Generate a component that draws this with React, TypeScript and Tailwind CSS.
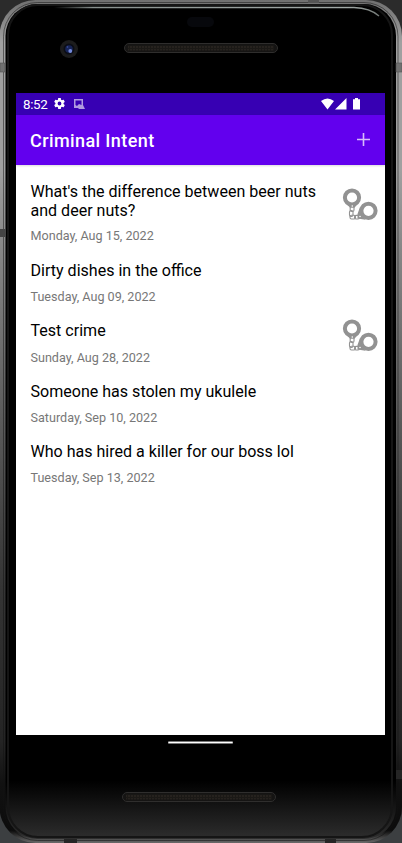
import React from "react";

type Crime = { title: string; date: string; solved: boolean; lines: number };

const crimes: Crime[] = [
  { title: "What's the difference between beer nuts and deer nuts?", date: "Monday, Aug 15, 2022", solved: true, lines: 2 },
  { title: "Dirty dishes in the office", date: "Tuesday, Aug 09, 2022", solved: false, lines: 1 },
  { title: "Test crime", date: "Sunday, Aug 28, 2022", solved: true, lines: 1 },
  { title: "Someone has stolen my ukulele", date: "Saturday, Sep 10, 2022", solved: false, lines: 1 },
  { title: "Who has hired a killer for our boss lol", date: "Tuesday, Sep 13, 2022", solved: false, lines: 1 },
];

function Handcuffs({ className }: { className: string }) {
  return (
    <svg width="36" height="34" viewBox="0 0 36 34" fill="none" stroke="#929292" className={`shrink-0 ${className}`}>
      <circle cx="10" cy="9.500" r="7.100" strokeWidth="4" />
      <path d="M2.500 13.500 8 19.800h4.500L17.500 13.500l-3.500 1.300-4 1.400-4-1.400z" fill="#929292" stroke="none" />
      <circle cx="26.500" cy="22.800" r="7.100" strokeWidth="4" />
      <path d="M18 19 15.500 26v4.500l8 1.300-3.500-5.500z" fill="#929292" stroke="none" />
      <rect x="8.200" y="18" width="3.800" height="5.500" rx="1.500" strokeWidth="1.100" />
      <rect x="7.500" y="22.500" width="3.500" height="6" rx="1.500" strokeWidth="1.100" />
      <rect x="8" y="27.200" width="5.500" height="3.800" rx="1.500" strokeWidth="1.100" />
      <rect x="12.500" y="27.400" width="5" height="3.600" rx="1.500" strokeWidth="1.100" />
      <circle cx="10.300" cy="18" r=".8" fill="#fff" stroke="none" />
      <circle cx="18" cy="28.500" r=".8" fill="#fff" stroke="none" />
    </svg>
  );
}

/* Metal shell of the handset, with its glass edge, antenna bands and side keys. */
function Shell() {
  return (
    <svg className="absolute inset-0" width="402" height="843" viewBox="0 0 402 843">
      <defs>
        <linearGradient id="backdrop" x1="0" y1="0" x2="0" y2="1">
          <stop offset="0" stopColor="#2b2b2b" />
          <stop offset=".96" stopColor="#2b2b2b" />
          <stop offset=".97" stopColor="#3c3f41" />
        </linearGradient>
        <linearGradient id="metal" x1="0" y1="0" x2="0" y2="1">
          <stop offset="0" stopColor="#707070" />
          <stop offset=".05" stopColor="#a0a0a0" />
          <stop offset=".2" stopColor="#a0a0a0" />
          <stop offset=".3" stopColor="#858585" />
          <stop offset=".5" stopColor="#5a5a5a" />
          <stop offset=".7" stopColor="#343434" />
          <stop offset=".88" stopColor="#242424" />
          <stop offset=".93" stopColor="#111" />
          <stop offset=".985" stopColor="#0c0c0c" />
          <stop offset="1" stopColor="#6a6a6a" />
        </linearGradient>
        <linearGradient id="glass" x1="0" y1="0" x2="0" y2="1">
          <stop offset="0" stopColor="#000" />
          <stop offset=".93" stopColor="#000" />
          <stop offset="1" stopColor="#2e2e2e" />
        </linearGradient>
        <linearGradient id="shine" gradientUnits="userSpaceOnUse" x1="54" y1="0" x2="380" y2="0">
          <stop offset="0" stopColor="#89918f" stopOpacity="0" />
          <stop offset=".12" stopColor="#89918f" />
          <stop offset=".9" stopColor="#a2aaa8" />
          <stop offset="1" stopColor="#bbc5c0" stopOpacity=".6" />
        </linearGradient>
      </defs>
      <rect width="402" height="843" fill="url(#backdrop)" />
      <rect x="-.5" y="0" width="402.500" height="843" rx="36" fill="url(#metal)" />
      <rect x="3.500" y="2.500" width="394.500" height="838" rx="34" fill="none" stroke="#111" strokeOpacity=".5" />
      <rect x="5.500" y="4" width="390.500" height="835" rx="32" fill="url(#glass)" />
      <rect x="8" y="5" width="384" height="832" rx="30" fill="none" stroke="#151515" strokeWidth="2" />
      <path d="M54 7.500H354Q370 8 379 16" fill="none" stroke="url(#shine)" strokeWidth="1.400" />
      <path d="M0 63h5v9H0zM396 63h6v9h-6z" fill="#707070" stroke="#555" strokeWidth=".6" />
      <path d="M308 0h11v3h-11z" fill="#555" />
      <path d="M0 229h5v8H0z" fill="#444" />
      <path d="M64 839h13v4H64zM325 839h11v4h-11zM396 770h6v9h-6z" fill="#252525" />
    </svg>
  );
}

function Speaker({ id }: { id: string }) {
  return (
    <svg width="154" height="10" viewBox="0 0 154 10">
      <defs>
        <pattern id={id} width="3" height="3" patternUnits="userSpaceOnUse">
          <rect width="3" height="3" fill="#1b1916" />
          <path d="M1 0v2" stroke="#302b25" />
        </pattern>
      </defs>
      <rect x=".5" y=".5" width="153" height="9" rx="4.500" fill="#151413" stroke="#2f2e2d" />
      <rect x="4" y="2.500" width="146" height="5" fill={`url(#${id})`} />
    </svg>
  );
}

export default function App() {
  return (
    <div className="relative h-[843px] w-[402px] overflow-hidden font-['Roboto',sans-serif]">
      <Shell />
      <div className="relative flex h-full flex-col pl-4 pr-[17px]">
        <div className="relative h-[93px] shrink-0">
          <svg className="absolute left-[44px] top-[40px]" width="18" height="18" viewBox="0 0 18 18">
            <circle cx="9" cy="9" r="9" fill="#1c1c1c" />
            <circle cx="9" cy="9" r="5.500" fill="#0b0d16" />
            <circle cx="9" cy="9" r="3.800" fill="#172457" />
            <circle cx="10.300" cy="11" r="1.900" fill="#7389d9" />
            <circle cx="7.500" cy="7" r=".8" fill="#4054a5" />
          </svg>
          <div className="absolute left-[171px] top-[17px] h-[10px] w-[27px] rounded-full bg-[#07080c]" />
          <div className="absolute left-[108px] top-[43px]"><Speaker id="earpiece" /></div>
        </div>
        <main className="flex h-[642px] shrink-0 flex-col bg-white">
          <div className="flex h-[22px] shrink-0 items-center bg-[#3700b3] pl-[7px] text-white">
            <span className="w-[25px] pt-px text-[13.400px] leading-[21px] tracking-[-0.35px]">8:52</span>
            <svg className="-mt-px ml-[5px]" width="13" height="13" viewBox="0 0 24 24" fill="#fff">
              <path d="M19.430 12.980c.04-.32.07-.64.07-.98s-.03-.66-.07-.98l2.110-1.650c.19-.15.24-.42.12-.64l-2-3.460c-.12-.22-.39-.3-.61-.22l-2.490 1c-.52-.4-1.080-.73-1.690-.98l-.38-2.650A.488.488 0 0 0 14 2h-4c-.25 0-.46.18-.49.42l-.38 2.650c-.61.25-1.170.59-1.690.98l-2.490-1c-.23-.09-.49 0-.61.22l-2 3.460c-.13.22-.07.49.12.64l2.110 1.650c-.04.32-.07.65-.07.98s.03.66.07.98l-2.110 1.650c-.19.15-.24.42-.12.64l2 3.460c.12.22.39.3.61.22l2.490-1c.52.4 1.080.73 1.690.98l.38 2.650c.03.24.24.42.49.42h4c.25 0 .46-.18.49-.42l.38-2.650c.61-.25 1.170-.59 1.690-.98l2.490 1c.23.09.49 0 .61-.22l2-3.460c.12-.22.07-.49-.12-.64zM12 15.500a3.500 3.500 0 1 1 0-7 3.500 3.500 0 0 1 0 7z" />
            </svg>
            <svg className="ml-[7px]" width="12" height="11" viewBox="0 0 12 11">
              <path fillRule="evenodd" fill="#b09ae0" d="M1 0H10V6L12 10H6L5 9H1zM2.500 1.500V6L4 7 6 5 8.500 6V1.500z" />
            </svg>
            <svg className="-mt-px ml-auto mr-[23px]" width="41" height="12" viewBox="0 0 41 12" fill="#fff">
              <path d="M0 3Q6.500-2 13 3L6.500 11.500zM25.500 0v11.500H14zM34 0h3v1.200h2v10.300h-7V1.200h2z" />
            </svg>
          </div>
          <header className="flex h-[50px] shrink-0 items-center justify-between bg-[#6200ee] pl-[14px] pr-[15px] text-white shadow-[0_1px_2px_rgba(0,0,0,0.15)]">
            <h1 className="pt-px text-[18px] font-medium leading-6 tracking-[0.400px]">Criminal Intent</h1>
            <svg className="-mt-[2px]" width="13" height="13" viewBox="0 0 13 13" fill="none" stroke="#d7bcfa" strokeWidth="1.600"><path d="M6.500 0v13M0 6.500h13" /></svg>
          </header>
          <ul className="flex flex-col pt-[7.500px]">
            {crimes.map((c) => (
              <li key={c.title} className={`flex items-center justify-between pl-[14.500px] pr-[7px] ${c.lines === 2 ? "h-[79.800px]" : "h-[60.400px]"}`}>
                <div className="w-[302px]">
                  <h2 className="text-[16.060px] leading-[19px] text-black">{c.title}</h2>
                  <p className={`text-[12.600px] leading-[15px] text-[#777] ${c.lines === 2 ? "mt-[8.500px]" : "mt-[9.500px]"}`}>{c.date}</p>
                </div>
                {c.solved && <Handcuffs className={c.lines === 2 ? "-mt-[14px]" : "-mt-[14px]"} />}
              </li>
            ))}
          </ul>
        </main>
        <div className="relative flex-1">
          <div className="absolute left-[152px] top-[6px] h-[3px] w-[65px] rounded-full border-y border-[#777] bg-white" />
          <div className="absolute left-[106px] top-[57px]"><Speaker id="loudspeaker" /></div>
        </div>
      </div>
    </div>
  );
}
